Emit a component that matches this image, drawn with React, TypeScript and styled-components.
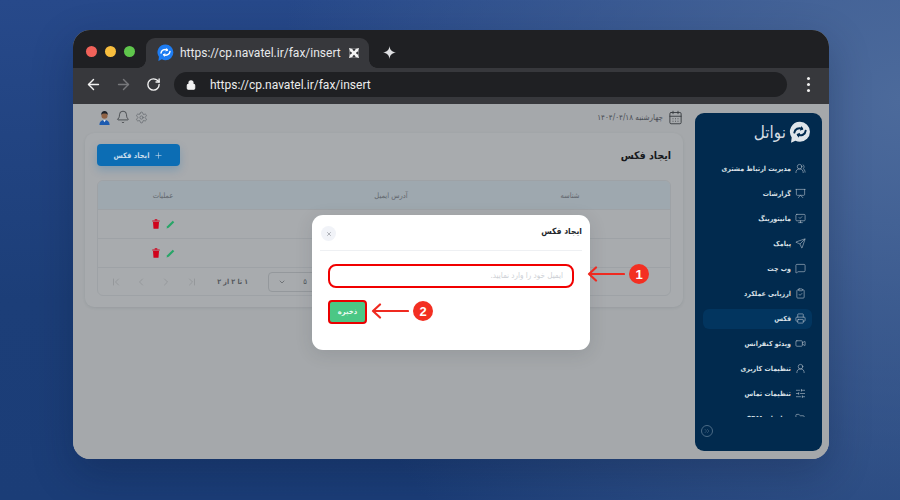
import React from "react";
import styled, { createGlobalStyle } from "styled-components";
import {
  ArrowLeft, ArrowRight, RotateCw, Lock, Bell, Settings, Plus, CalendarDays,
  ChevronLeft, ChevronRight, ChevronFirst, ChevronLast, ChevronsRight, ChevronDown, UsersRound, Presentation, MonitorCheck, Send,
  MessageSquare, ClipboardCheck, Printer, Video, UserRound, SlidersHorizontal, FolderOpen, X,
} from "lucide-react";

const FA = `"DejaVu Sans Condensed", "DejaVu Sans", sans-serif`;

const Global = createGlobalStyle`
  html, body { margin: 0; padding: 0; width: 900px; height: 500px; overflow: hidden; }
  * { box-sizing: border-box; }
  body { font-family: ${FA}; font-stretch: condensed; }
  svg { flex: none; }
`;

const Stage = styled.div`
  width: 900px; height: 500px; padding: 30px 71px 41px 73px;
  background:
    radial-gradient(ellipse 620px 620px at 100% 20%, #4c6a9b 0%, rgba(76,106,155,0) 100%),
    linear-gradient(180deg, #27498a 0%, #1c3e78 60%, #1b3d77 100%);
`;
const Win = styled.div`
  width: 756px; height: 429px; border-radius: 17px; overflow: hidden;
  display: flex; flex-direction: column; background: #a5a8ab;
  box-shadow: 0 14px 40px rgba(8, 20, 50, .28);
`;
const TabStrip = styled.div`
  height: 38px; flex: none; background: #1f2023; display: flex; align-items: flex-end;
`;
const Lights = styled.div`
  width: 73px; height: 38px; flex: none; display: flex; align-items: center; gap: 8px; padding: 4px 0 0 13px;
`;
const Light = styled.span<{ $c: string }>`
  width: 11px; height: 11px; border-radius: 50%; background: ${p => p.$c};
`;
const Tab = styled.div`
  position: relative; width: 223px; height: 30px; background: #37383c; border-radius: 9px 9px 0 0;
  display: flex; align-items: center; padding: 0 10px 1px 10px; color: #e8e9eb;
  font: 12px "Roboto", "Liberation Sans", sans-serif;
  &::before, &::after { content: ""; position: absolute; bottom: 0; width: 8px; height: 8px; }
  &::before { left: -8px; background: radial-gradient(circle at 0 0, transparent 7.5px, #37383c 8px); }
  &::after { right: -8px; background: radial-gradient(circle at 100% 0, transparent 7.5px, #37383c 8px); }
`;
const TabTitle = styled.span`
  margin-left: 5px; flex: 1; white-space: nowrap;
`;
const NewTab = styled.div`
  margin: 0 0 5px 14px; width: 16px; height: 22px; display: flex; align-items: center;
`;
const ToolBar = styled.div`
  height: 36px; flex: none; background: #37383c; display: flex; align-items: center; padding: 0 14px 3px 5px;
`;
const NavBtn = styled.div`
  width: 30px; display: flex; justify-content: center; flex: none;
`;
const Address = styled.div`
  width: 613px; height: 25px; margin-left: 6px; background: #1f2023; border-radius: 13px; flex: none;
  display: flex; align-items: center; padding-left: 12px; color: #eceded;
  font: 12px "Roboto", "Liberation Sans", sans-serif;
`;
const UrlText = styled.span`margin-left: 14px;`;
const Kebab = styled.div`
  margin-left: 20px; display: flex; flex-direction: column; gap: 3px;
  span { width: 3px; height: 3px; border-radius: 50%; background: #f1f1f1; }
`;
const Content = styled.div`
  position: relative; flex: 1; min-height: 0; display: flex; direction: rtl;
  padding: 9px 7px 8px 12px; gap: 12px; background: #a5a8ab;
`;
const Sidebar = styled.aside`
  width: 127px; flex: none; background: #012a4e; border-radius: 9px; display: flex; flex-direction: column;
  padding: 0 10px 0 8px;
`;
const Brand = styled.div`
  height: 36px; margin-top: 1px; flex: none; display: flex; align-items: center; gap: 2px;
  color: #d5dce2; font-size: 17px; font-weight: 400;
`;
const Menu = styled.nav`
  height: 261px; flex: none; margin-top: 6px; overflow: hidden; display: flex; flex-direction: column;
`;
const Item = styled.div<{ $on?: boolean }>`
  height: 25px; flex: none; display: flex; align-items: center; position: relative; color: #d9e0e6;
  font-size: 7px; font-weight: 700; white-space: nowrap; gap: 4px; padding-right: 6px;
  z-index: 0;
  ${p => p.$on ? `
    &::before { content: ""; position: absolute; z-index: -1; top: 2.5px; bottom: 2.5px; right: 0; left: 0; background: #02355f; border-radius: 6px; }
  ` : ""}
`;
const Collapse = styled.div`
  margin: 8px auto 0 -2px; width: 12px; height: 12px; border: 1px solid #4b6a85; border-radius: 50%;
  display: flex; align-items: center; justify-content: center; color: #5a7791; flex: none;
`;
const Main = styled.main`
  flex: 1; min-width: 0; display: flex; flex-direction: column;
`;
const TopBar = styled.div`
  height: 20px; flex: none; padding: 0 0 12px 0; display: flex; align-items: center; justify-content: space-between;
`;
const DateBox = styled.div`
  display: flex; align-items: center; gap: 5px; padding-right: 0; color: #4a4e55; font-size: 8px;
`;
const TopIcons = styled.div`
  display: flex; align-items: center; gap: 5px; padding-left: 13px; color: #3a3d42;
`;
const Card = styled.section`
  height: 174px; background: #a8abae; border-radius: 9px; padding: 11px 12px 0;
  box-shadow: 0 1px 3px rgba(60,70,80,.12);
`;
const CardHead = styled.div`
  height: 22px; display: flex; align-items: center; justify-content: space-between; margin-bottom: 14px;
`;
const CardTitle = styled.h2`
  margin: 0; font-size: 10.5px; font-weight: 700; color: #17191d;
`;
const AddBtn = styled.button`
  width: 83px; height: 22px; border: 0; border-radius: 4px; background: #0c6db4; color: #c8dcec; font: 700 7.5px ${FA};
  display: flex; align-items: center; justify-content: center; gap: 5px; direction: rtl;
  box-shadow: 0 4px 8px rgba(12,109,180,.25);
`;
const TableBox = styled.div`
  border: 1px solid #9ea2a6; border-radius: 6px; overflow: hidden;
`;
const Row = styled.div<{ $head?: boolean }>`
  height: 29px; display: grid; grid-template-columns: 200px 158px 84px 130px; align-items: center;
  border-bottom: 1px solid #9ea2a6; text-align: center; font-size: 7.5px;
  color: #62676e; background: ${p => p.$head ? "#9ea8af" : "transparent"};
`;
const Actions = styled.div`
  display: flex; align-items: center; justify-content: center; gap: 6px; direction: ltr;
`;
const Footer = styled.div`
  height: 27px; direction: ltr; display: flex; align-items: center; padding-left: 5px; color: #7c8085;
`;
const Pager = styled.div`
  width: 25.3px; display: flex; justify-content: center; color: #8b8e92;
`;
const Range = styled.span`
  margin-left: 8px; direction: rtl; width: 36px; font-size: 7px; font-weight: 700; color: #53575c; white-space: nowrap;
`;
const PerPage = styled.div`
  margin-left: 20px; width: 100px; height: 20px; border: 1px solid #94989c; border-radius: 4px; display: flex; align-items: center;
  padding-left: 9px; gap: 17px; font-size: 7.5px; color: #53575c;
`;
const Overlay = styled.div`
  position: absolute; inset: 0; display: flex; align-items: center; justify-content: center; padding-top: 2px;
`;
const Modal = styled.div`
  position: relative; width: 278px; height: 135px; background: #fff; border-radius: 11px; padding: 0 8px;
  box-shadow: 0 4px 18px rgba(30,40,50,.12);
`;
const ModalHead = styled.div`
  height: 36px; border-bottom: 1px solid #eef0f3; display: flex; align-items: center; justify-content: space-between; padding: 0 0 3px;
`;
const ModalTitle = styled.h3`
  margin: 0; font-size: 8.5px; font-weight: 700; color: #24272c;
`;
const CloseBtn = styled.div`
  width: 15px; height: 15px; margin: 5px 0 0 1px; background: #f1f3f8; border-radius: 50%; display: flex; align-items: center; justify-content: center; color: #6d7178;
`;
const ModalBody = styled.div`
  padding: 13px 8px 0; display: flex; flex-direction: column; align-items: flex-end; gap: 12px;
`;
const EmailInput = styled.input`
  width: 246px; height: 23.5px; border: 2px solid #f10000; border-radius: 8px; padding: 0 9px; background: #fff;
  font: 8px ${FA}; direction: rtl; outline: none;
  &::placeholder { color: #cdd0d5; opacity: 1; }
`;
const SaveBtn = styled.button`
  width: 39px; height: 24px; border: 2px solid #ea0000; border-radius: 4px; background: #4bc785; color: #eafaf1;
  font: 700 7.5px ${FA}; padding: 0;
`;
const Note = styled.div<{ $top: number; $left: number }>`
  position: absolute; top: ${p => p.$top}px; left: ${p => p.$left}px; display: flex; align-items: center; gap: 4px; direction: ltr;
`;
const Badge = styled.span`
  width: 20px; height: 20px; border-radius: 50%; background: #f32f22; color: #fff; display: flex; align-items: center; justify-content: center;
  font: 700 13px "Liberation Sans", sans-serif;
`;

const RedArrow = () => (
  <svg width="38" height="16" viewBox="0 0 38 16" fill="none">
    <path d="M37 8H2M9 1.5 2 8l7 6.5" stroke="#ef2a20" strokeWidth="2.2" strokeLinecap="round" strokeLinejoin="round" />
  </svg>
);

const Favicon = () => (
  <svg width="19" height="19" viewBox="0 0 20 20">
    <path d="M10 1.500a8.300 8.300 0 0 1 0 16.600c-1.400 0-2.700-.3-3.800-.9L2.500 19l.6-4.500A8.300 8.300 0 0 1 10 1.500Z" fill="#1d7cf2" />
    <path d="M5.300 10.500C5.600 7.500 9 6 11.700 7.300M14.700 9C14.500 12 11 13.600 8.300 12.300" stroke="#fff" strokeWidth="1.600" fill="none" strokeLinecap="round" />
    <path d="M11.200 4.900 12.900 7.800 9.900 8.900ZM8.800 14.700 7.100 11.800 10.100 10.700Z" fill="#fff" />
  </svg>
);

const LogoMark = () => (
  <svg width="24" height="24" viewBox="0 0 20 20">
    <path d="M10 1.500a8.300 8.300 0 0 1 0 16.600c-1.400 0-2.700-.3-3.800-.9L2.500 19l.6-4.500A8.300 8.300 0 0 1 10 1.500Z" fill="#dfe5ea" />
    <path d="M5.300 10.500C5.600 7.500 9 6 11.700 7.300M14.700 9C14.500 12 11 13.600 8.300 12.300" stroke="#012a4e" strokeWidth="1.700" fill="none" strokeLinecap="round" />
    <path d="M11.200 4.900 12.900 7.800 9.900 8.900ZM8.800 14.700 7.100 11.800 10.100 10.700Z" fill="#012a4e" />
  </svg>
);

const Avatar = () => (
  <svg width="13" height="15" viewBox="0 0 14 16">
    <path d="M1.500 16c0-3.600 2.200-5.300 5.500-5.300s5.500 1.700 5.500 5.300Z" fill="#1d5bb0" />
    <path d="M5.600 10.800h2.800L7 13Z" fill="#e9edf2" />
    <circle cx="7" cy="6" r="3.300" fill="#8f6244" />
    <path d="M3.500 5.600C3.200 2.300 5 1 7 1s3.800 1.300 3.500 4.600C9.800 4 8.500 3.700 7 3.700S4.200 4 3.500 5.600Z" fill="#1d2128" />
  </svg>
);

const Trash = () => (
  <svg width="8" height="10" viewBox="0 0 8 10">
    <path d="M.3 1.500h7.400v1H.3ZM2.700.3h2.600v1H2.700ZM1 3h6l-.5 6.700H1.500Z" fill="#d0021b" />
  </svg>
);

const Pencil = () => (
  <svg width="9" height="9" viewBox="0 0 10 10">
    <path d="M7.500.8 9.200 2.500 3 8.700.6 9.400l.7-2.400Z" fill="#27a567" />
  </svg>
);

const Spark = () => (
  <svg width="13" height="13" viewBox="0 0 13 13">
    <path d="M6.500 0C7 4 9 6 13 6.500 9 7 7 9 6.500 13 6 9 4 7 0 6.500 4 6 6 4 6.500 0Z" fill="#dfe0e2" />
  </svg>
);

const TabClose = () => (
  <svg width="10" height="10" viewBox="0 0 10 10">
    <path d="M0 0C2.500 1 7.500 1 10 0 9 2.500 9 7.500 10 10 7.500 9 2.500 9 0 10 1 7.500 1 2.500 0 0Z" fill="#f4f4f4" />
    <path d="M5 3.200 3.200 1.400 5 .8l1.800.6ZM5 6.800l1.800 1.800L5 9.200l-1.800-.6ZM3.200 5 1.400 6.800.8 5l.6-1.800ZM6.800 5l1.800-1.800.6 1.800-.6 1.800Z" fill="#37383c" />
  </svg>
);

const icon = { size: 11, strokeWidth: 1.3, color: "#b9c4ce" };
const items: { label: string; I: React.ComponentType<any>; on?: boolean }[] = [
  { label: "مدیریت ارتباط مشتری", I: UsersRound },
  { label: "گزارشات", I: Presentation },
  { label: "مانیتورینگ", I: MonitorCheck },
  { label: "پیامک", I: Send },
  { label: "وب چت", I: MessageSquare },
  { label: "ارزیابی عملکرد", I: ClipboardCheck },
  { label: "فکس", I: Printer, on: true },
  { label: "ویدئو کنفرانس", I: Video },
  { label: "تنظیمات کاربری", I: UserRound },
  { label: "تنظیمات تماس", I: SlidersHorizontal },
  { label: "تنظیمات CRM", I: FolderOpen },
];

export default function App() {
  return (
    <Stage>
      <Global />
      <Win>
        <TabStrip>
          <Lights>
            <Light $c="#f1625a" /><Light $c="#f8be3e" /><Light $c="#5fc64c" />
          </Lights>
          <Tab>
            <Favicon />
            <TabTitle>https://cp.navatel.ir/fax/insert</TabTitle>
            <TabClose />
          </Tab>
          <NewTab><Spark /></NewTab>
        </TabStrip>
        <ToolBar>
          <NavBtn><ArrowLeft size={17} strokeWidth={2} color="#f2f2f2" /></NavBtn>
          <NavBtn><ArrowRight size={17} strokeWidth={2} color="#77787b" /></NavBtn>
          <NavBtn><RotateCw size={15} strokeWidth={2.2} color="#f2f2f2" /></NavBtn>
          <Address>
            <Lock size={10} strokeWidth={2.5} color="#f2f2f2" fill="#f2f2f2" />
            <UrlText>https://cp.navatel.ir/fax/insert</UrlText>
          </Address>
          <Kebab><span /><span /><span /></Kebab>
        </ToolBar>
        <Content>
          <Sidebar>
            <Brand><LogoMark />نواتل</Brand>
            <Menu>
              {items.map(({ label, I, on }) => (
                <Item key={label} $on={on}><I {...icon} />{label}</Item>
              ))}
            </Menu>
            <Collapse><ChevronsRight size={8} strokeWidth={1.4} /></Collapse>
          </Sidebar>
          <Main>
            <TopBar>
              <DateBox>
                <CalendarDays size={15} strokeWidth={1.4} color="#34373c" />
                چهارشنبه ۱۴۰۴/۰۴/۱۸
              </DateBox>
              <TopIcons>
                <Settings size={13} strokeWidth={1.2} color="#5d6167" />
                <Bell size={14} strokeWidth={1.2} color="#2a2c30" />
                <Avatar />
              </TopIcons>
            </TopBar>
            <Card>
              <CardHead>
                <CardTitle>ایجاد فکس</CardTitle>
                <AddBtn><Plus size={9} strokeWidth={1.6} />ایجاد فکس</AddBtn>
              </CardHead>
              <TableBox>
                <Row $head>
                  <span>شناسه</span><span>آدرس ایمیل</span><span /><span>عملیات</span>
                </Row>
                <Row><span /><span /><span /><Actions><Trash /><Pencil /></Actions></Row>
                <Row><span /><span /><span /><Actions><Trash /><Pencil /></Actions></Row>
                <Footer>
                  <Pager><ChevronFirst size={12} strokeWidth={1.3} /></Pager>
                  <Pager><ChevronLeft size={12} strokeWidth={1.3} /></Pager>
                  <Pager><ChevronRight size={12} strokeWidth={1.3} /></Pager>
                  <Pager><ChevronLast size={12} strokeWidth={1.3} /></Pager>
                  <Range>۱ تا ۲ از ۲</Range>
                  <PerPage><ChevronDown size={8} strokeWidth={2} />۵</PerPage>
                </Footer>
              </TableBox>
            </Card>
          </Main>
          <Overlay>
            <Modal>
              <ModalHead>
                <ModalTitle>ایجاد فکس</ModalTitle>
                <CloseBtn><X size={6} strokeWidth={2} /></CloseBtn>
              </ModalHead>
              <ModalBody>
                <EmailInput placeholder="ایمیل خود را وارد نمایید." readOnly />
                <SaveBtn>ذخیره</SaveBtn>
              </ModalBody>
              <Note $top={49} $left={275}><RedArrow /><Badge>1</Badge></Note>
              <Note $top={86} $left={59}><RedArrow /><Badge>2</Badge></Note>
            </Modal>
          </Overlay>
        </Content>
      </Win>
    </Stage>
  );
}
